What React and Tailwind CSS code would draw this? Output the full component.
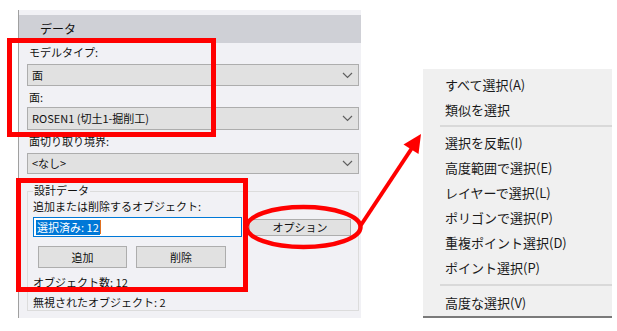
import React from "react";

const FONT = { fontFamily: '"Noto Sans CJK JP", "Noto Sans", sans-serif' };

function Chevron() {
  return (
    <svg width="11" height="7" viewBox="0 0 11 7" className="shrink-0">
      <path d="M1 1 L5.5 5.5 L10 1" fill="none" stroke="#606060" strokeWidth="1.2" />
    </svg>
  );
}

function Select({ value, h = "h-[22px]" }) {
  return (
    <div className={`${h} flex items-center justify-between border border-[#adadad] bg-[#e1e1e1] pl-[4px] pr-[5px]`}>
      <span className="text-[11px] leading-none text-[#111]">{value}</span>
      <Chevron />
    </div>
  );
}

function Label({ children, className = "" }) {
  return <div className={`h-[16px] text-[11px] leading-[16px] text-[#111] ${className}`}>{children}</div>;
}

const menuItems = [
  ["すべて選択(A)"],
  ["類似を選択"],
  ["sep"],
  ["選択を反転(I)"],
  ["高度範囲で選択(E)"],
  ["レイヤーで選択(L)"],
  ["ポリゴンで選択(P)"],
  ["重複ポイント選択(D)"],
  ["ポイント選択(P)"],
  ["sep"],
  ["高度な選択(V)"],
];

export default function App() {
  return (
    <div className="relative w-[617px] h-[331px] bg-white overflow-hidden" style={FONT}>
      {/* Left panel */}
      <div className="absolute left-[18px] top-[10px] w-[343px] h-[308px] border-l border-[#a0a0a0] bg-[#f1f1f5] flex flex-col pt-[5px]">
        <div className="h-[28px] bg-[#cfd0d6] flex items-center pl-[21px] text-[12px] text-[#111]">データ</div>
        <div className="flex flex-col pl-[8px] pr-[2px]">
          <Label className="mt-[1px] pl-[2px]">モデルタイプ:</Label>
          <div className="mt-[4px]"><Select value="面" /></div>
          <Label className="mt-[3px] pl-[2px]">面:</Label>
          <div className="mt-[2px]"><Select value="ROSEN1 (切土1-掘削工)" h="h-[23px]" /></div>
          <Label className="mt-[3px] pl-[2px]">面切り取り境界:</Label>
          <div className="mt-[4px]"><Select value="<なし>" h="h-[21px]" /></div>

          {/* Group box */}
          <div className="relative mt-[17px] h-[120px] border border-[#dcdcdc] pl-[5px] flex flex-col">
            <div className="absolute left-[5px] top-[-8px] px-[1px] bg-[#f1f1f5] text-[11px] leading-[12px] text-[#111]">設計データ</div>
            <div className="mt-[7px] h-[14px] text-[11px] leading-[14px] text-[#111]">追加または削除するオブジェクト:</div>
            <div className="mt-[4px] flex items-center gap-[7px]">
              <div className="w-[209px] h-[20px] border border-[#0078d7] bg-white flex items-center pl-[2px]">
                <span className="bg-[#0078d7] text-white text-[11px] leading-[15px] px-[1px]">選択済み: 12</span>
                <span className="w-[1px] h-[14px] bg-[#e07020]"></span>
              </div>
              <div className="w-[102px] h-[17px] border border-[#adadad] bg-[#e1e1e1] flex items-center justify-center text-[11px] text-[#111]">オプション</div>
            </div>
            <div className="mt-[9px] ml-[5px] flex gap-[9px]">
              <div className="w-[89px] h-[22px] border border-[#adadad] bg-[#e1e1e1] flex items-center justify-center text-[11px] text-[#111]">追加</div>
              <div className="w-[90px] h-[22px] border border-[#adadad] bg-[#e1e1e1] flex items-center justify-center text-[11px] text-[#111]">削除</div>
            </div>
            <Label className="mt-[6px]">オブジェクト数: 12</Label>
            <Label className="mt-[4px]">無視されたオブジェクト: 2</Label>
          </div>
        </div>
      </div>

      {/* Context menu */}
      <div className="absolute left-[423px] top-[69px] w-[189px] h-[249px] bg-[#f0f0f0] border-b-2 border-[#7a7a7a] flex flex-col pt-[3px]">
        {menuItems.map(([t], i) =>
          t === "sep" ? (
            <div key={i} className={`${i === 9 ? "h-[10px]" : "h-[8px]"} flex items-center pl-[17px]`}>
              <div className="h-[2px] w-full bg-[#d9d9d9]"></div>
            </div>
          ) : (
            <div key={i} className="h-[25px] flex items-center pl-[22px] text-[13px] text-[#1a1a1a]">{t}</div>
          )
        )}
      </div>

      {/* Red annotations */}
      <svg className="absolute inset-0 pointer-events-none" width="617" height="331" viewBox="0 0 617 331">
        <rect x="9.5" y="40.5" width="204" height="94" fill="none" stroke="#ff0000" strokeWidth="5" />
        <rect x="18.5" y="180.5" width="227" height="109" fill="none" stroke="#ff0000" strokeWidth="5" />
        <ellipse cx="303.5" cy="227" rx="57" ry="20" fill="none" stroke="#ff0000" strokeWidth="4.5" />
        <line x1="361" y1="225" x2="412" y2="148" stroke="#ff0000" strokeWidth="4" />
        <polygon points="421,134 418.5,154 403.5,144.5" fill="#ff0000" />
      </svg>
    </div>
  );
}
